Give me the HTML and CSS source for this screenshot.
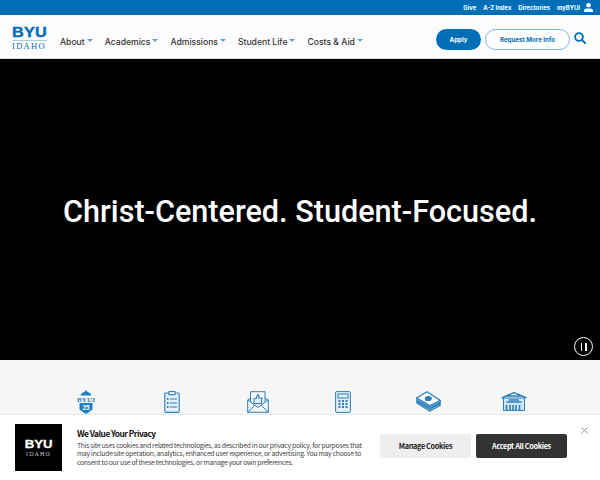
FILE: index.html
```html
<!DOCTYPE html>
<html lang="en">
<head>
<meta charset="utf-8">
<title>BYU-Idaho</title>
<link rel="stylesheet" href="styles.css">
</head>
<body>
<div class="topbar">
  <a>Give</a><a>A-Z Index</a><a>Directories</a><a class="my">myBYUI</a>
  <svg class="user" width="9" height="9" viewBox="0 0 10 10"><circle cx="5" cy="2.6" r="2.5" fill="#fff"/><path d="M0 10V8.400C0 6.800 1.600 6 3 6h4c1.400 0 3 .8 3 2.400V10z" fill="#fff"/></svg>
</div>
<header class="header">
  <div class="logo"><span class="logo-byu">BYU</span><span class="logo-idaho">IDAHO</span></div>
  <nav class="nav">
    <a>About<i class="caret"></i></a>
    <a>Academics<i class="caret"></i></a>
    <a>Admissions<i class="caret"></i></a>
    <a>Student Life<i class="caret"></i></a>
    <a>Costs &amp; Aid<i class="caret"></i></a>
  </nav>
  <div class="actions">
    <a class="btn btn-solid">Apply</a>
    <a class="btn btn-line">Request More Info</a>
    <svg class="search" width="12" height="12" viewBox="0 0 13 13" fill="none" stroke="#006eb6" stroke-width="2"><circle cx="5.400" cy="5.400" r="4.200"/><path d="M8.500 8.500l3.700 3.700" stroke-linecap="round"/></svg>
  </div>
</header>
<section class="hero">
  <h1>Christ-Centered. Student-Focused.</h1>
  <button class="pause" aria-label="Pause"><i></i><i></i></button>
</section>
<section class="links">
  <svg width="20" height="24" viewBox="0 0 20 24"><path d="M10 0l1.500 2c2.200.4 3.500 1.500 4 3.500h-11c.5-2 1.800-3.100 4-3.500z" fill="#1c7fc4"/><text x="10" y="11.800" class="ic-byui">BYUI</text><path d="M3.500 13h13v6.500l-3.500 2.500-3 2-3-2-3.500-2.500z" fill="#1c7fc4"/><text x="10" y="20" class="ic-25">25</text></svg>
  <svg width="16" height="22" viewBox="0 0 16 22" fill="none" stroke="#2a80bd" stroke-width="1.100"><rect x=".8" y="2" width="14.400" height="19.400" rx="1.200" fill="#e4eff7"/><rect x="5" y=".6" width="6" height="3" fill="#fff"/><path d="M6 8h7M6 12h7M6 16h7"/><path d="M3 8h1.500M3 12h1.500M3 16h1.500" stroke-width="1.800"/></svg>
  <svg width="22" height="22" viewBox="0 0 22 22" fill="none" stroke="#2a80bd" stroke-width="1"><path d="M3.500 11V.7h14.500V11"/><path d="M.7 9l2.800-2M21.300 9l-3.300-2M.7 9v12.300h20.600V9L11 16.500z" fill="#f6f6f6"/><path d="M.7 21.300L8 14M21.300 21.300L14 14"/><path d="M7 7.500h2.200l1.300-3.800 1.300.4v2.900h3.200l-.6 5.500H7z" stroke-width="1.100" fill="#e4eff7"/></svg>
  <svg width="16" height="22" viewBox="0 0 16 22" fill="none" stroke="#2a80bd" stroke-width="1"><rect x=".6" y=".6" width="14.800" height="20.800" rx="1.200" fill="#e4eff7"/><rect x="3" y="3" width="10" height="4"/><path d="M3.500 10h2M7 10h2M10.500 10h2M3.500 13h2M7 13h2M10.500 13h2M3.500 16h2M7 16h2M10.500 16h2" stroke-width="2"/></svg>
  <svg width="25" height="21" viewBox="0 0 25 21" fill="none" stroke="#2a80bd" stroke-width="1.100"><path d="M.8 7v5l13 8.200 10.400-5.700V9.500L11 .8z" fill="#7db5dd"/><path d="M.8 7l13 7.500 10.400-5L11 .8z" fill="#fff"/><ellipse cx="12.300" cy="7.500" rx="3" ry="2" fill="#2a80bd"/><path d="M.8 9l13 7.500 10.400-5M.8 10.500l13 7.500 10.400-5.200"/></svg>
  <svg width="26" height="19" viewBox="0 0 26 19" fill="none" stroke="#2a80bd" stroke-width="1"><path d="M.5 6L13 .6 25.500 6M5 4h16" stroke-width="1.400"/><rect x="2.500" y="6" width="21" height="12.400" fill="#d5e6f2"/><path d="M5.500 10h15M5.500 13v5M9 13v5M12 13v5M15 13v5M18.500 13v5M8 8h10" stroke-width="1.600"/></svg>
</section>
<aside class="cookie">
  <div class="cookie-logo"><span class="logo-byu">BYU</span><span class="logo-idaho">IDAHO</span></div>
  <div class="cookie-copy">
    <h2>We Value Your Privacy</h2>
    <p>This site uses cookies and related technologies, as described in our privacy policy, for purposes that may include site operation, analytics, enhanced user experience, or advertising. You may choose to consent to our use of these technologies, or manage your own preferences.</p>
  </div>
  <div class="cookie-buttons">
    <button class="cbtn cbtn-light">Manage Cookies</button>
    <button class="cbtn cbtn-dark">Accept All Cookies</button>
  </div>
  <svg class="close" width="7" height="7" viewBox="0 0 8 8" fill="none" stroke="#888" stroke-width="1"><path d="M.5.500l7 7M7.500.500l-7 7"/></svg>
</aside>
</body>
</html>
```
FILE: styles.css
```css
* { box-sizing: border-box; }
html, body { margin: 0; height: 480px; overflow: hidden; background: #fff; }
body { font-family: "Inter", "Liberation Sans", sans-serif; }

.topbar { height: 15px; background: #006eb6; display: flex; justify-content: flex-end; align-items: center; padding-right: 7px; gap: 7px; color: #fff; font-size: 5.900px; font-weight: 700; }
.user { margin-left: -3px; }

.header { height: 44px; background: #fcfcfc; border-bottom: 1px solid #ddd; display: flex; align-items: center; padding: 0 14px 0 12px; }
.logo { width: 35px; color: #006eb6; display: flex; flex-direction: column; align-items: stretch; margin-right: 13px; margin-top: 3px; }
.logo-byu { font-family: "Liberation Sans", sans-serif; font-weight: 700; font-size: 14.500px; line-height: 12px; letter-spacing: .2px; -webkit-text-stroke: .4px currentColor; transform: scaleX(1.120); transform-origin: left; }
.logo-idaho { font-family: "Liberation Serif", serif; font-size: 8.500px; line-height: 8px; letter-spacing: 1.300px; white-space: nowrap; border-top: 1px solid #a9cde6; margin-top: 1.500px; padding-top: 1px; }
.nav { display: flex; gap: 12px; font-size: 8.600px; font-weight: 500; color: #333; margin-top: 10px; }
.caret { display: inline-block; margin: 0 0 3px 2px; border: 3px solid transparent; border-top: 3px solid #5aa3d6; border-bottom: 0; vertical-align: middle; }
.actions { margin-left: auto; display: flex; align-items: center; margin-top: 5px; }
.btn { height: 21px; border-radius: 11px; display: flex; align-items: center; justify-content: center; font-size: 6.200px; font-weight: 700; }
.btn-solid { width: 45px; background: #006eb6; color: #fff; }
.btn-line { width: 85px; margin-left: 4px; background: #fff; border: 1px solid #7fb4d8; color: #006eb6; }
.search { margin-left: 4px; margin-top: -2px; }

.hero { height: 301px; background: #000; position: relative; display: flex; align-items: center; justify-content: center; }
.hero h1 { margin: 0; color: #fff; font-family: "Roboto", sans-serif; font-weight: 500; font-size: 30.600px; position: relative; top: 1.500px; }
.pause { position: absolute; right: 7px; bottom: 4px; width: 19px; height: 19px; padding: 0; border: 1.300px solid #fff; border-radius: 50%; background: #000; display: flex; align-items: center; justify-content: center; gap: 3px; }
.pause i { width: 1.500px; height: 8px; background: #fff; }

.links { height: 120px; background: #f6f6f6; position: relative; }
.links svg { position: absolute; }
.links svg:nth-child(1) { left: 76px; top: 30px; }
.links svg:nth-child(2) { left: 164px; top: 31px; }
.links svg:nth-child(3) { left: 247px; top: 31px; }
.links svg:nth-child(4) { left: 335px; top: 31px; }
.links svg:nth-child(5) { left: 416px; top: 31px; }
.links svg:nth-child(6) { left: 501px; top: 32px; }
.ic-byui { font-family: "Liberation Serif", serif; font-weight: 700; font-size: 7px; fill: #1c7fc4; text-anchor: middle; letter-spacing: .1px; }
.ic-25 { font-family: "Liberation Sans", sans-serif; font-weight: 700; font-size: 6.500px; fill: #fff; text-anchor: middle; }

.cookie { position: fixed; left: 0; right: 0; bottom: 0; height: 66px; background: #fff; border-top: 1px solid #e8e8e8; display: flex; align-items: flex-start; padding: 9px 0 0 15px; font-family: "Noto Sans CJK SC", "Noto Sans", sans-serif; }
.cookie-logo { width: 47px; height: 47px; background: #000; color: #fff; display: flex; flex-direction: column; align-items: center; justify-content: center; }
.cookie-logo .logo-byu { font-size: 11px; line-height: 12px; transform: scaleX(1.200); transform-origin: center; letter-spacing: 0; -webkit-text-stroke: .3px currentColor; }
.cookie-logo .logo-idaho { border: 0; font-size: 6px; line-height: 7px; letter-spacing: 1.100px; padding: 0; color: #ccc; margin: 1px 0 0; }
.cookie-copy { width: 288px; margin-left: 15px; }
.cookie-copy h2 { margin: 3px 0 2px; font-size: 8.400px; line-height: 12px; font-weight: 700; color: #111; letter-spacing: -.55px; }
.cookie-copy p { margin: 0; font-size: 6.800px; line-height: 8.400px; color: #444; letter-spacing: -.28px; }
.cookie-buttons { display: flex; gap: 5px; margin: 10px 0 0 15px; }
.cbtn { height: 24px; width: 91px; border: 0; border-radius: 2px; font-family: inherit; font-size: 7.300px; font-weight: 700; letter-spacing: -.33px; padding: 0; }
.cbtn-light { background: #eee; color: #222; }
.cbtn-dark { background: #333; color: #fff; }
.close { position: absolute; right: 12px; top: 12px; }
```
